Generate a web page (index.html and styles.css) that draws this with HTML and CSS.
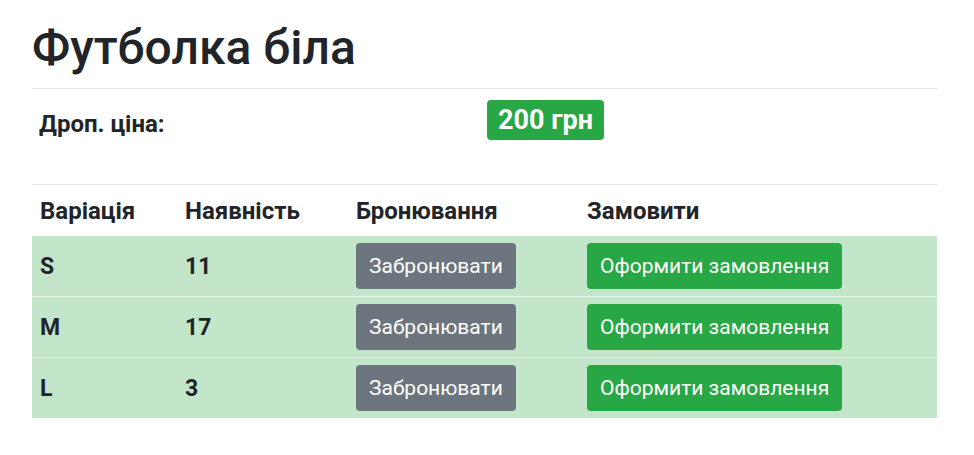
FILE: index.html
```html
<!DOCTYPE html>
<html>
	<head>
		<meta charset="utf-8">
		<title>Футболка біла</title>
		<link rel="stylesheet" href="styles.css">
	</head>
	<body>
		<div class = "container">
			<h1 class = "title">Футболка біла</h1>
			<hr>
			<div class = "priceRow">
				<div class = "priceLabel">Дроп. ціна:</div>
				<div class = "priceValue"><span class = "badge">200 грн</span></div>
			</div>
			<hr>
			<!--Variations-->
			<table class = "variants">
				<thead>
					<tr>
						<th class = "colSize">Варіація</th>
						<th class = "colStock">Наявність</th>
						<th class = "colBook">Бронювання</th>
						<th>Замовити</th>
					</tr>
				</thead>
				<tbody>
					<tr>
						<td>S</td>
						<td>11</td>
						<td><button class = "btn btnGray">Забронювати</button></td>
						<td><button class = "btn btnGreen">Оформити замовлення</button></td>
					</tr>
					<tr>
						<td>M</td>
						<td>17</td>
						<td><button class = "btn btnGray">Забронювати</button></td>
						<td><button class = "btn btnGreen">Оформити замовлення</button></td>
					</tr>
					<tr>
						<td>L</td>
						<td>3</td>
						<td><button class = "btn btnGray">Забронювати</button></td>
						<td><button class = "btn btnGreen">Оформити замовлення</button></td>
					</tr>
				</tbody>
			</table>
		</div>
	</body>
</html>
```

FILE: styles.css
```css
body {
	margin: 0;
	font-family: Roboto, "Noto Sans", sans-serif;
	color: #212529;
	background-color: #fff;
}

.container {
	padding: 19px 37px 0 32px;
}

.title {
	font-size: 48px;
	font-weight: 500;
	line-height: 57px;
	margin: 0 0 12px 0;
}

hr {
	border: 0;
	border-top: 1px solid #e0e0e0;
	margin: 0;
}

/*Price*/
.priceRow {
	display: flex;
	align-items: center;
	padding: 11px 0 44px 0;
}

.priceLabel {
	box-sizing: border-box;
	width: 455px;
	padding: 8px 0 0 7px;
	font-size: 24px;
	font-weight: 700;
}

.badge {
	display: inline-block;
	background-color: #28a745;
	color: #fff;
	font-size: 27px;
	font-weight: 700;
	line-height: 27px;
	padding: 7px 11px 6px 11px;
	border-radius: 4px;
}

/*Table*/
.variants {
	width: 100%;
	border-collapse: collapse;
}

.variants th {
	text-align: left;
	font-size: 24px;
	font-weight: 700;
	padding: 12px 8px 11px 8px;
	line-height: 28px;
}

.variants td {
	font-size: 23px;
	font-weight: 700;
	padding: 7px 8px;
	background-color: #c3e6cb;
	border-bottom: 1px solid #e4f2e7;
}

.variants tbody tr:last-child td {
	border-bottom: 0;
}

.colSize {
	width: 129px;
}

.colStock {
	width: 155px;
}

.colBook {
	width: 215px;
}

.btn {
	font-family: Roboto, "Noto Sans", sans-serif;
	font-size: 21px;
	line-height: 28px;
	padding: 9px 13px;
	border: 0;
	border-radius: 4px;
	color: #fff;
	display: block;
}

.btnGray {
	background-color: #6c757d;
}

.btnGreen {
	background-color: #28a745;
}
```
